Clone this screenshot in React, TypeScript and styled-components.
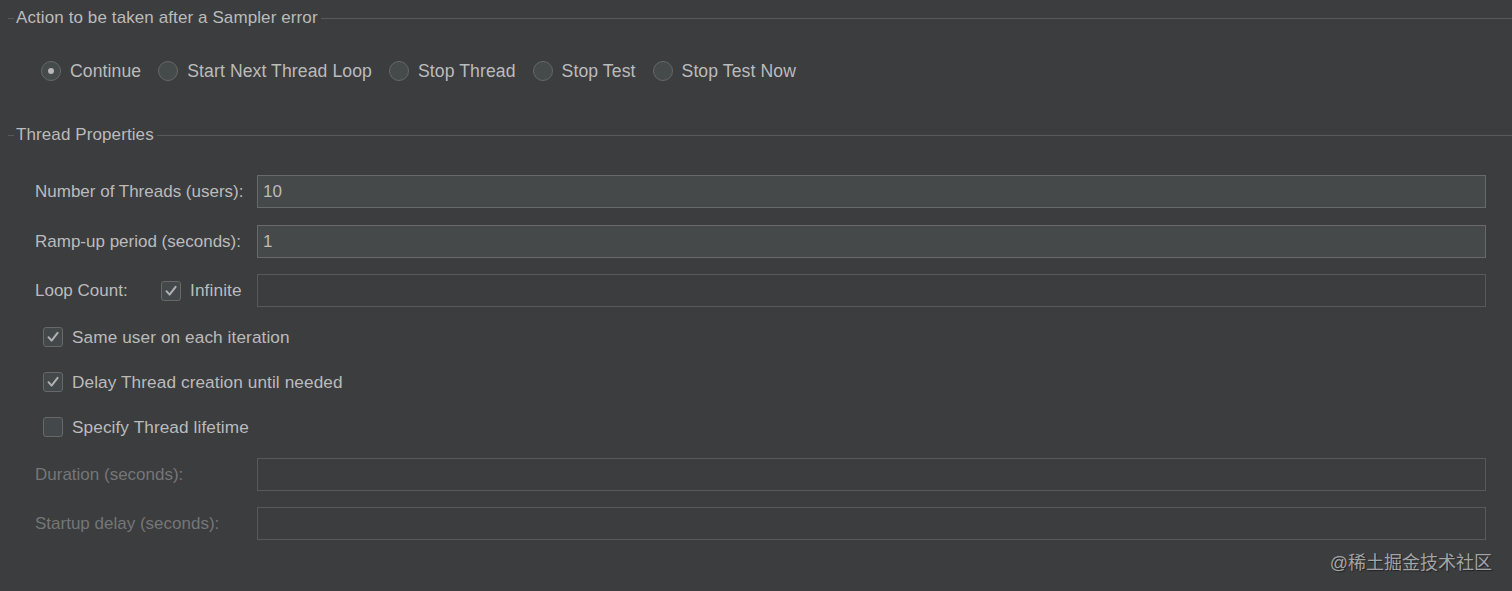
import styled, { createGlobalStyle } from "styled-components";

const GlobalStyle = createGlobalStyle`
  html, body {
    margin: 0;
    padding: 0;
    background: #3c3d3f;
  }
  body {
    font-family: "Liberation Sans", Arial, sans-serif;
    color: #bbbbbb;
  }
`;

const Page = styled.div`
  position: relative;
  width: 1512px;
  height: 591px;
  padding-top: 1px;
  box-sizing: border-box;
  background: #3c3d3f;
  overflow: hidden;
`;

const TitleRow = styled.div<{ $mt?: number }>`
  display: flex;
  align-items: center;
  height: 34px;
  margin-top: ${(p) => p.$mt ?? 0}px;
  padding-left: 8px;
  font-size: 17px;
  letter-spacing: 0.1px;
  color: #bbbbbb;

  &::before {
    content: "";
    width: 6px;
    height: 1px;
    background: #57595b;
    margin-right: 2px;
  }
  &::after {
    content: "";
    flex: 1;
    height: 1px;
    background: #57595b;
    margin-left: 3px;
  }
`;

const RadioRow = styled.div`
  display: flex;
  align-items: center;
  height: 32px;
  margin-top: 20px;
  padding-left: 41px;
  gap: 17px;
`;

const Option = styled.label<{ $size?: number }>`
  display: flex;
  align-items: center;
  gap: 9px;
  font-size: ${(p) => p.$size ?? 17}px;
  letter-spacing: 0.1px;
  color: #bbbbbb;
  white-space: nowrap;
`;

const RadioCircle = styled.span<{ $on?: boolean }>`
  width: 18px;
  height: 18px;
  border-radius: 50%;
  border: 1px solid #66686a;
  background: #454a4a;
  display: flex;
  align-items: center;
  justify-content: center;

  &::after {
    content: "";
    width: 6px;
    height: 6px;
    border-radius: 50%;
    background: ${(p) => (p.$on ? "#b8b8b8" : "transparent")};
  }
`;

const CheckBox = styled.span`
  width: 18px;
  height: 18px;
  border-radius: 3px;
  border: 1px solid #66686a;
  background: #43484a;
  display: flex;
  align-items: center;
  justify-content: center;
`;

const Form = styled.div`
  display: flex;
  flex-direction: column;
  margin-top: 23px;
  padding: 0 26px 0 35px;
`;

const FieldRow = styled.div<{ $mt?: number }>`
  display: grid;
  grid-template-columns: 222px 1fr;
  align-items: center;
  height: 33px;
  margin-top: ${(p) => p.$mt ?? 0}px;
`;

const Label = styled.div<{ $disabled?: boolean }>`
  display: flex;
  align-items: center;
  font-size: 17px;
  color: ${(p) => (p.$disabled ? "#747678" : "#bbbbbb")};
  white-space: nowrap;
`;

const LoopLabel = styled.span`
  width: 126px;
`;

const TextInput = styled.div<{ $disabled?: boolean }>`
  box-sizing: border-box;
  height: 33px;
  border: 1px solid ${(p) => (p.$disabled ? "#58595b" : "#67696b")};
  background: ${(p) => (p.$disabled ? "#3c3d3f" : "#45494a")};
  font-size: 17px;
  color: #bbbbbb;
  display: flex;
  align-items: center;
  padding-left: 5px;
`;

const CheckRow = styled.div<{ $mt?: number }>`
  display: flex;
  align-items: center;
  height: 30px;
  margin-top: ${(p) => p.$mt ?? 0}px;
  padding-left: 8px;
`;

const Watermark = styled.div`
  position: absolute;
  right: 20px;
  top: 548px;
  font-size: 18px;
  color: #a3a4a6;
  text-shadow: 1px 1px 1px #222;
  font-family: "Liberation Sans", "Noto Sans CJK SC", sans-serif;
`;

const Check = ({ on }: { on?: boolean }) => (
  <CheckBox>
    {on && (
      <svg width="14" height="14" viewBox="0 0 14 14">
        <path
          d="M2.5 7.2 L5.6 10.6 L11.6 2.8"
          fill="none"
          stroke="#b0b0b0"
          strokeWidth="2"
          strokeLinecap="round"
          strokeLinejoin="round"
        />
      </svg>
    )}
  </CheckBox>
);

const radios = [
  "Continue",
  "Start Next Thread Loop",
  "Stop Thread",
  "Stop Test",
  "Stop Test Now",
];

export default function App() {
  return (
    <Page>
      <GlobalStyle />
      <TitleRow>Action to be taken after a Sampler error</TitleRow>
      <RadioRow>
        {radios.map((r, i) => (
          <Option key={r} $size={17.6}>
            <RadioCircle $on={i === 0} />
            {r}
          </Option>
        ))}
      </RadioRow>

      <TitleRow $mt={31}>Thread Properties</TitleRow>
      <Form>
        <FieldRow>
          <Label>Number of Threads (users):</Label>
          <TextInput>10</TextInput>
        </FieldRow>
        <FieldRow $mt={17}>
          <Label>Ramp-up period (seconds):</Label>
          <TextInput>1</TextInput>
        </FieldRow>
        <FieldRow $mt={16}>
          <Label>
            <LoopLabel>Loop Count:</LoopLabel>
            <Option $size={17.3}>
              <Check on />
              Infinite
            </Option>
          </Label>
          <TextInput $disabled />
        </FieldRow>

        <CheckRow $mt={15}>
          <Option $size={17.2}>
            <Check on />
            Same user on each iteration
          </Option>
        </CheckRow>
        <CheckRow $mt={15}>
          <Option $size={17.2}>
            <Check on />
            Delay Thread creation until needed
          </Option>
        </CheckRow>
        <CheckRow $mt={15}>
          <Option $size={17.2}>
            <Check />
            Specify Thread lifetime
          </Option>
        </CheckRow>

        <FieldRow $mt={16}>
          <Label $disabled>Duration (seconds):</Label>
          <TextInput $disabled />
        </FieldRow>
        <FieldRow $mt={16}>
          <Label $disabled>Startup delay (seconds):</Label>
          <TextInput $disabled />
        </FieldRow>
      </Form>
      <Watermark>@稀土掘金技术社区</Watermark>
    </Page>
  );
}
